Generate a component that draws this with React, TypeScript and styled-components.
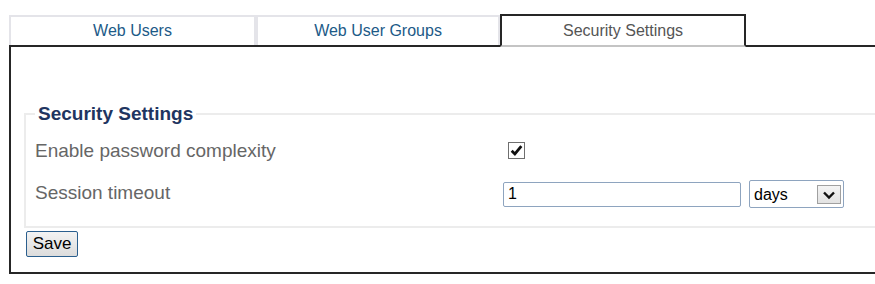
import React from "react";
import styled, { createGlobalStyle } from "styled-components";

const Global = createGlobalStyle`
  html, body { margin: 0; padding: 0; background: #fff; overflow: hidden; }
  body { font-family: "Liberation Sans", Arial, sans-serif; }
`;

const Page = styled.div`
  padding: 14px 0 0 9px;
  width: 900px;
`;

const TabBar = styled.div`
  display: flex;
  align-items: flex-end;
  position: relative;
  z-index: 2;
`;

const Tab = styled.div<{ $active?: boolean; $w: number }>`
  box-sizing: border-box;
  width: ${(p) => p.$w}px;
  display: flex;
  align-items: center;
  justify-content: center;
  font-size: 16px;
  background: #fff;
  ${(p) =>
    p.$active
      ? `
    height: 33px;
    margin-bottom: -2px;
    border: 2px solid #262626;
    border-bottom: 2px solid #c4c4c4;
    color: #555;
    padding-top: 1px;
  `
      : `
    height: 30px;
    border: 2px solid #e4e4e9;
    border-bottom: none;
    color: #1c5a87;
  `}
`;

const Panel = styled.div`
  box-sizing: border-box;
  width: 900px;
  height: 229px;
  border-top: 2px solid #262626;
  border-left: 2px solid #262626;
  border-bottom: 2px solid #262626;
  padding: 56px 0 0 13px;
  display: flex;
  flex-direction: column;
  align-items: flex-start;
`;

const FieldSet = styled.fieldset`
  box-sizing: border-box;
  width: 880px;
  margin: 0;
  padding: 5px 0 9px 9px;
  border: 2px solid #ececec;
  border-right: none;
`;

const Legend = styled.legend`
  padding: 0 3px;
  font-size: 19px;
  font-weight: bold;
  color: #1f3561;
`;

const Row = styled.div<{ $h: number }>`
  display: flex;
  align-items: center;
  height: ${(p) => p.$h}px;
`;

const Label = styled.div<{ $lift?: number }>`
  width: 468px;
  font-size: 19px;
  color: #666;
  padding-bottom: ${(p) => p.$lift ?? 0}px;
`;

const CheckBox = styled.span`
  box-sizing: border-box;
  width: 17px;
  height: 17px;
  margin-left: 5px;
  border: 1px solid #6f6f6f;
  background: #fff;
  display: flex;
  align-items: center;
  justify-content: center;
`;

const TextInput = styled.input`
  box-sizing: border-box;
  width: 238px;
  height: 25px;
  border: 1px solid #8ea4bf;
  border-radius: 2px;
  padding: 0 4px;
  font-family: "Liberation Sans", Arial, sans-serif;
  font-size: 16px;
  color: #000;
  outline: none;
`;

const SelectWrap = styled.div`
  position: relative;
  margin-left: 8px;
  width: 95px;
  height: 28px;
`;

const Select = styled.select`
  box-sizing: border-box;
  width: 95px;
  height: 28px;
  appearance: none;
  border: 1px solid #8ea4bf;
  border-radius: 2px;
  background: #fff;
  padding: 0 0 0 4px;
  font-family: "Liberation Sans", Arial, sans-serif;
  font-size: 16px;
  color: #000;
  outline: none;
`;

const Arrow = styled.span`
  position: absolute;
  top: 5px;
  right: 3px;
  box-sizing: border-box;
  width: 24px;
  height: 19px;
  border: 1px solid #a0a0a0;
  background: linear-gradient(#f4f4f4, #e2e2e2);
  display: flex;
  align-items: center;
  justify-content: center;
  pointer-events: none;
`;

const SaveButton = styled.button`
  box-sizing: border-box;
  margin: 3px 0 0 2px;
  height: 26px;
  width: 52px;
  padding: 0;
  border: 1px solid #2b5f8e;
  border-radius: 2px;
  background: linear-gradient(#f3f3f3, #dcdcdc);
  font-family: "Liberation Sans", Arial, sans-serif;
  font-size: 17px;
  color: #000;
`;

export default function App() {
  return (
    <>
      <Global />
      <Page>
        <TabBar>
          <Tab $w={247}>Web Users</Tab>
          <Tab $w={244}>Web User Groups</Tab>
          <Tab $w={246} $active>
            Security Settings
          </Tab>
        </TabBar>
        <Panel>
          <FieldSet>
            <Legend>Security Settings</Legend>
            <Row $h={41}>
              <Label>Enable password complexity</Label>
              <CheckBox>
                <svg width="15" height="15" viewBox="0 0 14 14">
                  <path d="M2.5 7.2 L5.5 10.2 L11.5 3" fill="none" stroke="#111" strokeWidth="2.6" />
                </svg>
              </CheckBox>
            </Row>
            <Row $h={46}>
              <Label $lift={3}>Session timeout</Label>
              <TextInput defaultValue="1" />
              <SelectWrap>
                <Select defaultValue="days">
                  <option value="days">days</option>
                  <option value="hours">hours</option>
                </Select>
                <Arrow>
                  <svg width="14" height="10" viewBox="0 0 14 10">
                    <path d="M2 2.5 L7 7.5 L12 2.5" fill="none" stroke="#111" strokeWidth="2.4" />
                  </svg>
                </Arrow>
              </SelectWrap>
            </Row>
          </FieldSet>
          <SaveButton>Save</SaveButton>
        </Panel>
      </Page>
    </>
  );
}
